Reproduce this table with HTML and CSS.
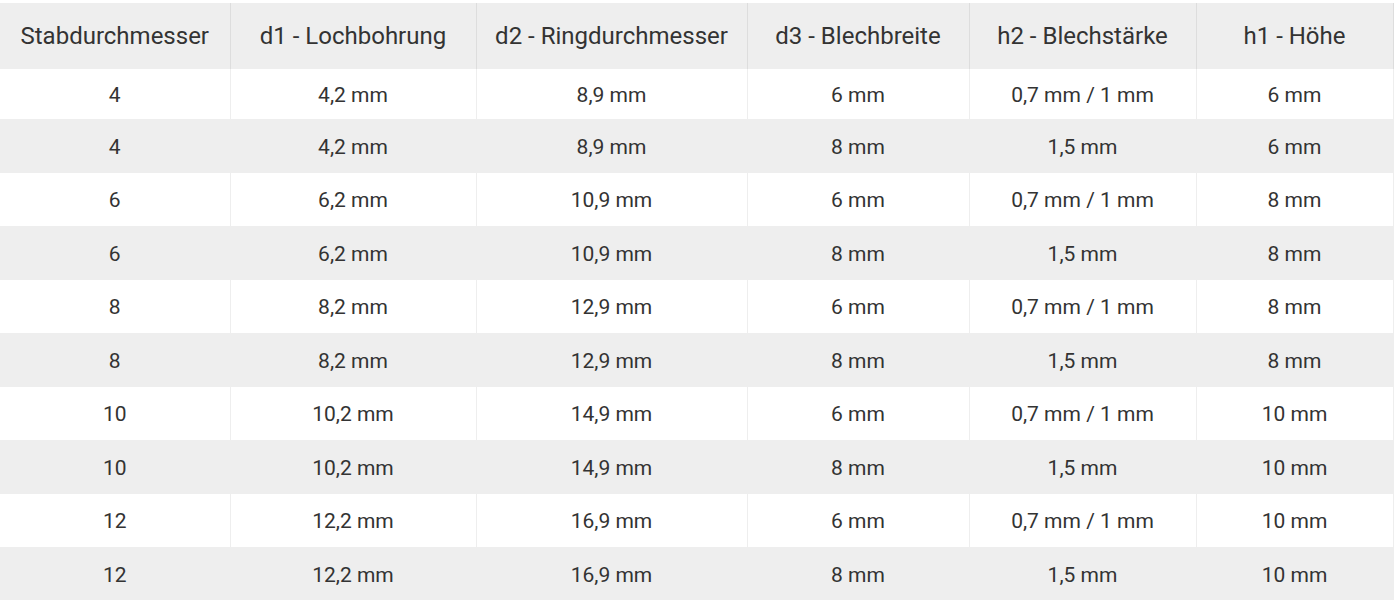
FILE: index.html
```html
<!DOCTYPE html>
<html lang="de">
<head>
<meta charset="utf-8">
<title>Tabelle</title>
<link rel="stylesheet" href="styles.css">
</head>
<body>
<table class="spec">
  <colgroup>
    <col class="c1"><col class="c2"><col class="c3"><col class="c4"><col class="c5"><col class="c6">
  </colgroup>
  <thead>
    <tr><th>Stabdurchmesser</th><th>d1 - Lochbohrung</th><th>d2 - Ringdurchmesser</th><th>d3 - Blechbreite</th><th>h2 - Blechstärke</th><th>h1 - Höhe</th></tr>
  </thead>
  <tbody>
    <tr><td>4</td><td>4,2 mm</td><td>8,9 mm</td><td>6 mm</td><td>0,7 mm / 1 mm</td><td>6 mm</td></tr>
    <tr><td>4</td><td>4,2 mm</td><td>8,9 mm</td><td>8 mm</td><td>1,5 mm</td><td>6 mm</td></tr>
    <tr><td>6</td><td>6,2 mm</td><td>10,9 mm</td><td>6 mm</td><td>0,7 mm / 1 mm</td><td>8 mm</td></tr>
    <tr><td>6</td><td>6,2 mm</td><td>10,9 mm</td><td>8 mm</td><td>1,5 mm</td><td>8 mm</td></tr>
    <tr><td>8</td><td>8,2 mm</td><td>12,9 mm</td><td>6 mm</td><td>0,7 mm / 1 mm</td><td>8 mm</td></tr>
    <tr><td>8</td><td>8,2 mm</td><td>12,9 mm</td><td>8 mm</td><td>1,5 mm</td><td>8 mm</td></tr>
    <tr><td>10</td><td>10,2 mm</td><td>14,9 mm</td><td>6 mm</td><td>0,7 mm / 1 mm</td><td>10 mm</td></tr>
    <tr><td>10</td><td>10,2 mm</td><td>14,9 mm</td><td>8 mm</td><td>1,5 mm</td><td>10 mm</td></tr>
    <tr><td>12</td><td>12,2 mm</td><td>16,9 mm</td><td>6 mm</td><td>0,7 mm / 1 mm</td><td>10 mm</td></tr>
    <tr><td>12</td><td>12,2 mm</td><td>16,9 mm</td><td>8 mm</td><td>1,5 mm</td><td>10 mm</td></tr>
  </tbody>
</table>
</body>
</html>
```
FILE: styles.css
```css
html, body {
  margin: 0;
  padding: 0;
  background: #ffffff;
}
body {
  padding-top: 3px;
  font-family: Roboto, "Liberation Sans", Arial, sans-serif;
  color: #333333;
}
.spec {
  border-collapse: collapse;
  table-layout: fixed;
  width: 1393px;
}
.c1 { width: 230px; }
.c2 { width: 246px; }
.c3 { width: 271px; }
.c4 { width: 222px; }
.c5 { width: 227px; }
.c6 { width: 197px; }
.spec th {
  background: #eeeeee;
  height: 66px;
  padding: 0;
  font-weight: 400;
  font-size: 24px;
  text-align: center;
  border-right: 1px solid #dddddd;
  color: #333333;
}
.spec td {
  height: 51.5px;
  padding: 2px 0 0;
  font-size: 21px;
  text-align: center;
  border-right: 1px solid #eeeeee;
}
.spec tbody tr:first-child td {
  height: 48px;
}
.spec tbody tr:nth-child(even) td {
  background: #eeeeee;
}
```
